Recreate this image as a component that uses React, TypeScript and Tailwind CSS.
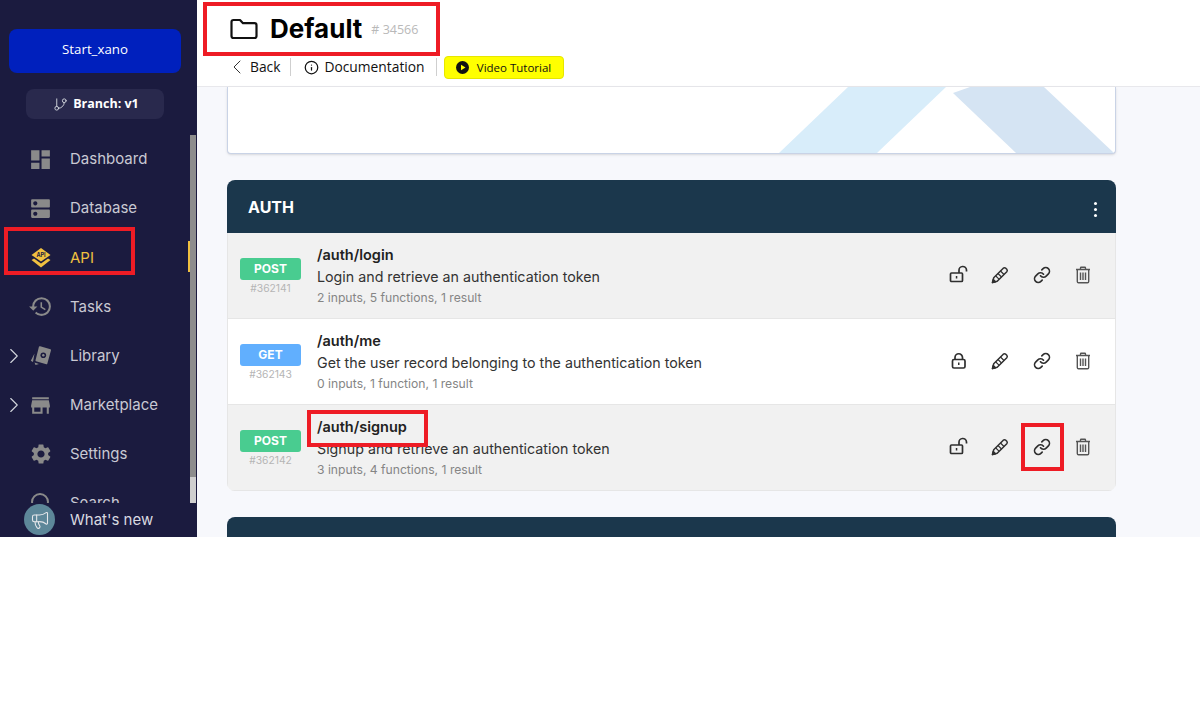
import { ChevronLeft, ChevronRight, GitBranch, Info, Link, Megaphone, Search } from "lucide-react";
import { MdDashboard, MdDns, MdHistory, MdSettings, MdStore } from "react-icons/md";

function ApiIcon() {
  return (
    <svg width="22" height="22" viewBox="0 0 22 22">
      <path d="M11 1 L20.500 8 L11 14.500 L1.500 8 Z" fill="#f0c040" />
      <path d="M1.500 13 L4 11.500 L11 16.500 L18 11.500 L20.500 13 L11 20.500 Z" fill="#f0c040" />
      <text x="11" y="10" textAnchor="middle" fontSize="5.500" fontWeight="700" fill="#1b1b3f" fontFamily="Inter, sans-serif">API</text>
    </svg>
  );
}

function LibraryIcon() {
  return (
    <svg width="22" height="22" viewBox="0 0 22 22">
      <path d="M9 1.500 Q9.500 1 10.200 1.200 L20.500 4.200 Q21.200 4.500 21 5.200 L17.300 18.800 Q17 19.500 16.300 19.300 L6 16.300 Q5.300 16 5.500 15.300 Z" fill="#8a8a8a" />
      <circle cx="13.300" cy="10.300" r="2.800" fill="#1b1b3f" />
      <circle cx="13.300" cy="10.300" r="1.200" fill="#8a8a8a" />
      <path d="M4.500 8.500 L3 17 L0.800 15.800 Z M4.500 17.500 L9 19 L5.500 20 Z" fill="#8a8a8a" />
    </svg>
  );
}

function LockOpenIcon() {
  return (
    <svg width="20" height="20" viewBox="0 0 20 20" fill="none" stroke="#2f2f2f" strokeWidth="1.700">
      <rect x="1.500" y="8" width="12" height="8.500" rx="1" />
      <path d="M10 8 V5.500 A3.700 3.700 0 0 1 17.500 5 V6.500" />
      <rect x="6.800" y="11" width="1.500" height="2.500" fill="#2f2f2f" stroke="none" />
    </svg>
  );
}

function LockIcon() {
  return (
    <svg width="20" height="20" viewBox="0 0 20 20" fill="none" stroke="#2f2f2f" strokeWidth="1.700">
      <rect x="3.500" y="8.500" width="12.500" height="8.500" rx="1.500" />
      <path d="M6 8.500 V6.500 A3.700 3.700 0 0 1 13.500 6.500 V8.500" />
      <rect x="9" y="11.500" width="1.500" height="2.500" fill="#2f2f2f" stroke="none" />
    </svg>
  );
}

function PencilIcon() {
  return (
    <svg width="20" height="20" viewBox="0 0 20 20" fill="none" stroke="#2f2f2f" strokeWidth="1.500" strokeLinejoin="round">
      <path d="M2.500 17.500 L3.700 12.800 L13.300 3.200 Q14.500 2.200 15.700 3.200 L16.800 4.300 Q17.800 5.500 16.800 6.700 L7.200 16.300 Z" />
      <path d="M5.800 11 L9 14.200 M8 8.500 L11.500 12 M10.500 6 L14 9.500" strokeWidth="1.100" />
      <path d="M2.500 17.500 L3.300 14.500 L5.500 16.700 Z" fill="#2f2f2f" />
    </svg>
  );
}

function TrashIcon() {
  return (
    <svg width="20" height="20" viewBox="0 0 20 20" fill="none" stroke="#555555" strokeWidth="1.400">
      <path d="M3 4.500 H17 M7.500 4.500 V3 Q7.500 2.300 8.200 2.300 H11.800 Q12.500 2.300 12.500 3 V4.500" />
      <path d="M4.300 4.500 V16.500 Q4.300 17.700 5.500 17.700 H14.500 Q15.700 17.700 15.700 16.500 V4.500" />
      <path d="M7.500 7.500 V15 M10 7.500 V15 M12.500 7.500 V15" />
    </svg>
  );
}

const navItems = [
  { label: "Dashboard", icon: <MdDashboard size={25} /> },
  { label: "Database", icon: <MdDns size={25} /> },
  { label: "API", icon: <ApiIcon />, active: true },
  { label: "Tasks", icon: <MdHistory size={25} /> },
  { label: "Library", icon: <LibraryIcon />, arrow: true },
  { label: "Marketplace", icon: <MdStore size={25} />, arrow: true },
  { label: "Settings", icon: <MdSettings size={24} /> },
  { label: "Search", icon: <Search size={24} /> },
];

const rows = [
  { method: "POST", id: "#362141", path: "/auth/login", desc: "Login and retrieve an authentication token", meta: "2 inputs, 5 functions, 1 result", open: true },
  { method: "GET", id: "#362143", path: "/auth/me", desc: "Get the user record belonging to the authentication token", meta: "0 inputs, 1 function, 1 result", open: false },
  { method: "POST", id: "#362142", path: "/auth/signup", desc: "Signup and retrieve an authentication token", meta: "3 inputs, 4 functions, 1 result", open: true },
];

function Sidebar() {
  return (
    <aside className="relative w-[197px] h-full shrink-0 overflow-hidden bg-[#1b1b3f] font-['Inter',sans-serif]">
      <div className="ml-[9px] mr-[16px] mt-[29px] h-[44px] pb-[3px] rounded-lg bg-[#0020bd] flex items-center justify-center text-[13.3px] text-white font-['Open_Sans',sans-serif]">
        Start_xano
      </div>
      <div className="ml-[26px] mr-[33px] mt-[16px] pl-[2px] h-[30px] rounded-lg bg-[#29294d] flex items-center justify-center gap-[5px] text-[12.5px] font-bold text-white font-['Open_Sans',sans-serif]">
        <GitBranch size={15} strokeWidth={1.5} className="text-gray-300" />
        Branch: v1
      </div>
      <nav className="mt-[16px] flex flex-col">
        {navItems.map((item) => (
          <div key={item.label} className="relative h-[49.14px] flex items-center">
            {item.arrow && <ChevronRight size={26} strokeWidth={1} className="absolute left-[1px] text-gray-300" />}
            <span className={`ml-[28px] w-[25px] flex justify-center ${item.active ? "" : "text-[#8a8a8a]"}`}>{item.icon}</span>
            <span className={`ml-[17px] text-[15px] ${item.active ? "text-[#f0c040]" : "text-[#c9c9d3]"}`}>{item.label}</span>
          </div>
        ))}
      </nav>
      {/* scrollbar */}
      <div className="absolute right-[1px] top-[135px] w-[6px] h-[368px] bg-[#8d8d8d]">
        <div className="absolute bottom-0 w-full h-[26px] bg-[#cfcfcf]" />
      </div>
      <div className="absolute left-[188px] top-[241px] w-[2px] h-[31px] bg-[#f0c040]" />
      <div className="absolute left-0 bottom-0 w-[190px] h-[34px] bg-[#1b1b3f] flex items-center">
        <span className="ml-[24px] -mt-[1px] w-[31px] h-[31px] rounded-full bg-[#5d8799] flex items-center justify-center">
          <Megaphone size={20} strokeWidth={1.3} className="text-gray-200" />
        </span>
        <span className="ml-[15px] text-[15px] text-[#d9d9e0]">What's new</span>
      </div>
    </aside>
  );
}

function Header() {
  return (
    <header className="h-[87px] shrink-0 bg-white border-b border-[#e8e8ec] pl-[33px] font-['Open_Sans',sans-serif]">
      <div className="h-[57px] flex items-center">
        <svg width="28" height="22" viewBox="0 0 28 22" fill="none" stroke="#111111" strokeWidth="2.200" strokeLinejoin="round">
          <path d="M1.500 4 Q1.500 2 3.500 2 H10 L13 5.200 H24.500 Q26.500 5.200 26.500 7.200 V18 Q26.500 20 24.500 20 H3.500 Q1.500 20 1.500 18 Z" />
        </svg>
        <span className="ml-[12px] text-[26px] font-bold text-black font-['Inter',sans-serif]">Default</span>
        <span className="ml-[9px] mt-[4px] text-[12.5px] text-[#b9b9b9]">
          # 34566
        </span>
      </div>
      <div className="-mt-[2px] flex items-center text-[13.8px] text-[#111111]">
        <ChevronLeft size={24} strokeWidth={1} className="-ml-[5px] text-[#333333]" />
        <span className="ml-[1px]">Back</span>
        <span className="ml-[10px] h-[18px] border-l border-[#cfcfcf]" />
        <Info size={15} strokeWidth={2} className="ml-[13px]" />
        <span className="ml-[5px]">Documentation</span>
        <span className="ml-[11px] h-[18px] border-l border-[#cfcfcf]" />
        <span className="ml-[7px] mt-[1px] w-[120px] h-[23px] rounded bg-[#ffff00] border border-[#e6e600] flex items-center justify-center gap-[8px] text-[11.5px] font-medium">
          <svg width="13" height="13" viewBox="0 0 13 13">
            <circle cx="6.500" cy="6.500" r="6.500" fill="#111111" />
            <path d="M5 3.700 L9.500 6.500 L5 9.300 Z" fill="#ffff00" />
          </svg>
          Video Tutorial
        </span>
      </div>
    </header>
  );
}

function EndpointRow({ row, shaded }: { row: (typeof rows)[number]; shaded: boolean }) {
  return (
    <div className={`h-[86px] flex items-center border-b border-x border-[#e6e6e6] ${shaded ? "bg-[#f1f1f1]" : "bg-white"}`}>
      <div className="ml-[12px] w-[61px] shrink-0 flex flex-col items-center mt-[1px]">
        <span className={`w-full h-[22px] pt-px rounded-[3px] flex items-center justify-center text-[12px] font-bold text-white ${row.method === "GET" ? "bg-[#61affe]" : "bg-[#49cc90]"}`}>
          {row.method}
        </span>
        <span className="mt-[1px] text-[10.3px] leading-[14px] text-[#b5b5b5]">{row.id}</span>
      </div>
      <div className="ml-[16px] flex-1">
        <div className="mb-px text-[14.5px] leading-[21px] font-semibold text-[#222222]">{row.path}</div>
        <div className="text-[14.25px] leading-[22px] text-[#333333]">{row.desc}</div>
        <div className="text-[12.15px] leading-[19px] text-[#858585]">{row.meta}</div>
      </div>
      <div className="mr-[22px] -mt-[1px] flex items-center gap-[21.500px]">
        <span className="ml-px flex">{row.open ? <LockOpenIcon /> : <LockIcon />}</span>
        <PencilIcon />
        <Link size={18} strokeWidth={2.2} className="text-[#2f2f2f] mx-[1px]" />
        <TrashIcon />
      </div>
    </div>
  );
}

export default function App() {
  return (
    <div className="relative w-[1200px] h-[722px] overflow-hidden bg-white">
      <div className="flex h-[537px]">
        <Sidebar />
        <main className="flex-1 flex flex-col bg-[#f7f8fc] overflow-hidden font-['Inter',sans-serif]">
          <Header />
          <div className="ml-[30px] w-[889px]">
            <div className="relative h-[67px] bg-white border border-t-0 border-[#c9d3e6] rounded-b shadow-sm overflow-hidden">
              <svg className="absolute inset-0" width="887" height="66" viewBox="0 0 887 66">
                <path d="M620 0 H718 L649 66 H551 Z" fill="#d8edfa" />
                <path d="M725 6 L742 0 H816 L886 66 H788 Z" fill="#d5e4f3" />
              </svg>
            </div>
            <section className="mt-[26px] rounded-lg overflow-hidden">
              <div className="h-[53px] bg-[#1b374c] flex items-center justify-between pl-[21px] pr-[19px]">
                <span className="text-[16px] font-bold text-white">AUTH</span>
                <span className="mt-[6px] flex flex-col gap-[3px]">
                  <span className="w-[3px] h-[3px] rounded-full bg-white" />
                  <span className="w-[3px] h-[3px] rounded-full bg-white" />
                  <span className="w-[3px] h-[3px] rounded-full bg-white" />
                </span>
              </div>
              {rows.map((row, i) => (
                <EndpointRow key={row.id} row={row} shaded={i !== 1} />
              ))}
            </section>
            <div className="mt-[26px] h-[60px] rounded-t-lg bg-[#1b374c]" />
          </div>
        </main>
      </div>
      {/* red annotation boxes */}
      <div className="absolute left-[203px] top-[2px] w-[237px] h-[54px] border-4 border-[#ee1c25]" />
      <div className="absolute left-[4px] top-[227px] w-[131px] h-[48px] border-4 border-[#ee1c25]" />
      <div className="absolute left-[307px] top-[410px] w-[121px] h-[37px] border-4 border-[#ee1c25] " />
      <div className="absolute left-[1021px] top-[423px] w-[43px] h-[48px] border-4 border-[#ee1c25]" />
    </div>
  );
}
